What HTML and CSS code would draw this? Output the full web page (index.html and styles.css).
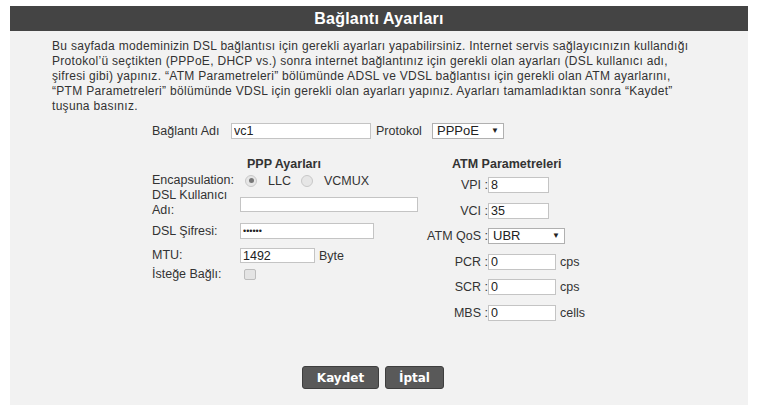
FILE: index.html
```html
<!DOCTYPE html>
<html lang="tr">
<head>
    <meta charset="UTF-8">
    <title>Bağlantı Ayarları</title>
    <link rel="stylesheet" href="styles.css">
</head>
<body>
    <div class="panel">
        <div class="panel-title">Bağlantı Ayarları</div>
        <div class="panel-body">
            <p class="intro">Bu sayfada modeminizin DSL bağlantısı için gerekli ayarları yapabilirsiniz. Internet servis sağlayıcınızın kullandığı Protokol’ü seçtikten (PPPoE, DHCP vs.) sonra internet bağlantınız için gerekli olan ayarları (DSL kullanıcı adı, şifresi gibi) yapınız. “ATM Parametreleri” bölümünde ADSL ve VDSL bağlantısı için gerekli olan ATM ayarlarını, “PTM Parametreleri” bölümünde VDSL için gerekli olan ayarları yapınız. Ayarları tamamladıktan sonra “Kaydet” tuşuna basınız.</p>

            <div class="form">
                <div class="top-row">
                    <label class="conn-label">Bağlantı Adı</label>
                    <input type="text" class="field conn-name" value="vc1">
                    <label class="proto-label">Protokol</label>
                    <div class="select proto-select">
                        <select><option>PPPoE</option></select>
                    </div>
                </div>

                <div class="columns">
                    <div class="ppp">
                        <div class="section-title ppp-title">PPP Ayarları</div>
                        <div class="row enc-row">
                            <span class="lbl">Encapsulation:</span>
                            <span class="radio checked"></span><span class="radio-text">LLC</span>
                            <span class="radio"></span><span class="radio-text">VCMUX</span>
                        </div>
                        <div class="row user-row">
                            <span class="lbl">DSL Kullanıcı Adı:</span>
                            <input type="text" class="field user-field" value="">
                        </div>
                        <div class="row pass-row">
                            <span class="lbl">DSL Şifresi:</span>
                            <input type="password" class="field pass-field" value="123456">
                        </div>
                        <div class="row mtu-row">
                            <span class="lbl">MTU:</span>
                            <input type="text" class="field mtu-field" value="1492">
                            <span class="unit">Byte</span>
                        </div>
                        <div class="row opt-row">
                            <span class="lbl">İsteğe Bağlı:</span>
                            <span class="check"></span>
                        </div>
                    </div>

                    <div class="atm">
                        <div class="section-title atm-title">ATM Parametreleri</div>
                        <div class="arow">
                            <span class="albl">VPI :</span>
                            <input type="text" class="field small" value="8">
                        </div>
                        <div class="arow">
                            <span class="albl">VCI :</span>
                            <input type="text" class="field small" value="35">
                        </div>
                        <div class="arow">
                            <span class="albl">ATM QoS :</span>
                            <div class="select qos-select">
                                <select><option>UBR</option></select>
                            </div>
                        </div>
                        <div class="arow">
                            <span class="albl">PCR :</span>
                            <input type="text" class="field medium" value="0">
                            <span class="unit">cps</span>
                        </div>
                        <div class="arow">
                            <span class="albl">SCR :</span>
                            <input type="text" class="field medium" value="0">
                            <span class="unit">cps</span>
                        </div>
                        <div class="arow">
                            <span class="albl">MBS :</span>
                            <input type="text" class="field medium" value="0">
                            <span class="unit">cells</span>
                        </div>
                    </div>
                </div>
            </div>

            <div class="buttons">
                <button class="btn save">Kaydet</button>
                <button class="btn cancel">İptal</button>
            </div>
        </div>
    </div>
</body>
</html>
```

FILE: styles.css
```css
body {
    margin: 0;
    background-color: #FFFFFF;
    font-family: "Liberation Sans", Arial, sans-serif;
    color: #333333;
}
.panel {
    width: 738px;
    margin: 6px 0 0 10px;
}
.panel-title {
    height: 25px;
    line-height: 25px;
    background-color: #444444;
    color: #FFFFFF;
    font-size: 16px;
    font-weight: bold;
    letter-spacing: 0.2px;
    text-align: center;
}
.panel-body {
    background-color: #F2F2F2;
    padding: 8px 0 16px 0;
}
.intro {
    margin: 0;
    padding: 0 48px 0 42px;
    font-size: 12px;
    letter-spacing: 0.3px;
    line-height: 15px;
    color: #333333;
}
.form {
    padding-left: 142px;
    font-size: 12.5px;
}
.top-row {
    display: flex;
    align-items: center;
    height: 16px;
    margin-top: 9px;
}
.conn-label {
    width: 78px;
}
.field {
    box-sizing: border-box;
    height: 16px;
    padding: 0 2px;
    border: 1px solid #C4C4C4;
    background-color: #FFFFFF;
    font-family: "Liberation Sans", Arial, sans-serif;
    font-size: 12.5px;
    color: #222222;
    outline: none;
}
.conn-name {
    width: 140px;
    margin-left: 1px;
}
.proto-label {
    margin-left: 5px;
    width: 56px;
}
.select {
    position: relative;
    height: 16px;
}
.select select {
    appearance: none;
    -webkit-appearance: none;
    box-sizing: border-box;
    width: 100%;
    height: 16px;
    padding: 0 4px;
    border: 1px solid #B0B0B0;
    background-color: #FFFFFF;
    font-family: "Liberation Sans", Arial, sans-serif;
    font-size: 13px;
    color: #222222;
    line-height: 14px;
}
.select::after {
    content: "▼";
    position: absolute;
    right: 5px;
    top: 3px;
    font-size: 8px;
    color: #222222;
    pointer-events: none;
}
.proto-select {
    width: 72px;
}
.columns {
    display: flex;
    margin-top: 19px;
}
.ppp {
    width: 268px;
}
.section-title {
    font-weight: bold;
    font-size: 12.5px;
    line-height: 13px;
    height: 13px;
    color: #333333;
}
.ppp-title {
    padding-left: 95px;
    margin-bottom: 2px;
}
.row {
    display: flex;
    align-items: center;
}
.lbl {
    width: 88px;
    flex-shrink: 0;
    line-height: 15px;
}
.enc-row {
    height: 15px;
}
.radio {
    box-sizing: border-box;
    width: 12px;
    height: 12px;
    border-radius: 50%;
    border: 1px solid #C8C8C8;
    background-color: #E6E6E6;
    margin-left: 5px;
    position: relative;
}
.radio.checked::after {
    content: "";
    position: absolute;
    left: 2.5px;
    top: 2.5px;
    width: 5px;
    height: 5px;
    border-radius: 50%;
    background-color: #777777;
}
.radio-text {
    margin-left: 11px;
    margin-right: 5px;
}
.user-row {
    height: 30px;
}
.user-row .lbl {
    width: 78px;
    margin-right: 10px;
}
.user-field {
    width: 178px;
    height: 15px;
    margin-top: 2px;
}
.pass-row {
    height: 16px;
    margin-top: 5px;
}
.pass-field {
    width: 134px;
    font-size: 9px;
}
.mtu-row {
    height: 15px;
    margin-top: 9px;
}
.mtu-field {
    width: 75px;
    height: 15px;
}
.unit {
    margin-left: 4px;
}
.opt-row {
    height: 14px;
    margin-top: 4px;
}
.check {
    box-sizing: border-box;
    width: 12px;
    height: 11px;
    margin-left: 4px;
    border: 1px solid #BDBDBD;
    border-radius: 2px;
    background-color: #E4E4E4;
}
.atm-title {
    padding-left: 32px;
    margin-bottom: 6px;
}
.arow {
    display: flex;
    align-items: center;
    height: 16px;
    margin-bottom: 9.5px;
}
.albl {
    width: 68px;
    text-align: right;
    white-space: nowrap;
}
.small {
    width: 61px;
}
.medium {
    width: 68px;
}
.qos-select {
    width: 77px;
}
.buttons {
    display: flex;
    justify-content: center;
    gap: 6px;
    padding-right: 12px;
    margin-top: 36px;
}
.btn {
    height: 23px;
    padding: 0;
    border: 1px solid #3E3E3E;
    border-radius: 3px;
    background-color: #595959;
    color: #FFFFFF;
    font-family: "DejaVu Sans", Verdana, sans-serif;
    font-size: 12px;
    font-weight: bold;
    cursor: pointer;
}
.save {
    width: 77px;
}
.cancel {
    width: 59px;
}
```
